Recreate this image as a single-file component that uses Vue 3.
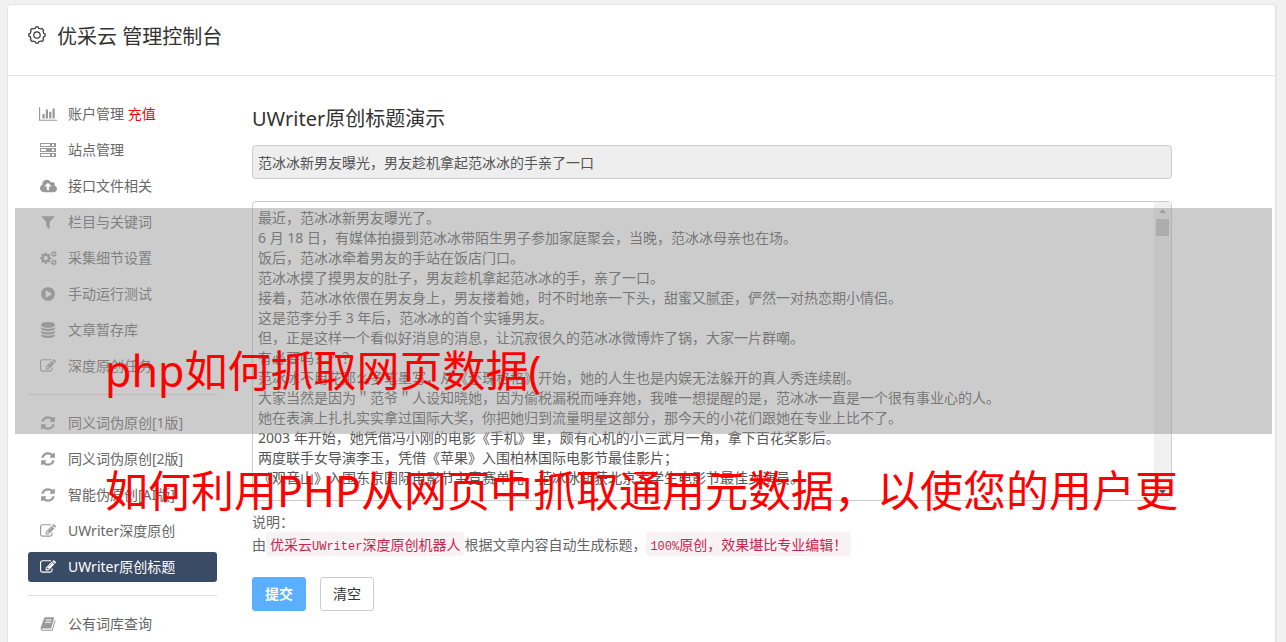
<script setup>
import { ref } from 'vue'

function gearPath(cx, cy, teeth, outer, inner, hole) {
  const step = (Math.PI * 2) / teeth
  const pts = []
  for (let i = 0; i < teeth; i++) {
    const a = i * step
    const corners = [[-0.3, inner], [-0.18, outer], [0.18, outer], [0.3, inner]]
    for (const [k, r] of corners) {
      pts.push(`${(cx + r * Math.cos(a + k * step)).toFixed(2)} ${(cy + r * Math.sin(a + k * step)).toFixed(2)}`)
    }
  }
  return `M${pts.join('L')}ZM${cx - hole} ${cy}a${hole} ${hole} 0 1 0 ${hole * 2} 0a${hole} ${hole} 0 1 0 ${-hole * 2} 0Z`
}

const cogs = gearPath(5.8, 8.2, 8, 5.8, 4.5, 2.1) + gearPath(13.9, 4, 7, 3.1, 2.3, 1.1) + gearPath(13.9, 12.4, 7, 3.1, 2.3, 1.1)
const brandGear = gearPath(9, 9, 8, 8.2, 7, 3.2)

const icons = {
  chart: { box: '0 0 2048 1792', w: 18, d: 'M640 896v512h-256v-512h256zm384-512v1024h-256v-1024h256zm1024 1152v128h-2048v-1536h128v1408h1920zm-640-896v768h-256v-768h256zm384-384v1152h-256v-1152h256z' },
  server: { box: '0 0 16 16', w: 16, d: 'M0 1h16v4H0zM1 2v2h9v-2zM12 2v2h2v-2zM0 6h16v4H0zM1 7v2h5v-2zM12 7v2h2v-2zM0 11h16v4H0zM1 12v2h9v-2zM12 12v2h2v-2z' },
  cloud: { box: '0 0 1920 1792', w: 17, d: 'M1280 928q0-14-9-23l-352-352q-9-9-23-9t-23 9l-351 351q-10 12-10 24 0 14 9 23t23 9h224v352q0 13 9.5 22.5t22.5 9.5h192q13 0 22.5-9.5t9.5-22.5v-352h224q13 0 22.5-9.5t9.5-22.5zm640 288q0 159-112.5 271.5t-271.5 112.500h-1088q-185 0-316.500-131.500t-131.500-316.500q0-130 70-240t188-165q-2-30-2-43 0-212 150-362t362-150q156 0 285.500 87t188.500 231q71-62 166-62 106 0 181 75t75 181q0 76-41 138 130 31 213.500 135.500t83.500 238.500z' },
  filter: { box: '0 0 1792 1792', w: 16, d: 'M1595 295q17 41-14 70l-493 493v742q0 42-39 59-13 5-25 5-27 0-45-19l-256-256q-19-19-19-45v-486l-493-493q-31-29-14-70 17-39 59-39h1280q42 0 59 39z' },
  cogs: { box: '0 0 17 16', w: 17, d: cogs },
  play: { box: '0 0 1792 1792', w: 16, d: 'M896 128q209 0 385.500 103t279.500 279.500 103 385.500-103 385.500-279.500 279.500-385.500 103-385.500-103-279.500-279.500-103-385.500 103-385.500 279.500-279.500 385.500-103zm384 823q32-18 32-55t-32-55l-544-320q-31-19-64-1-32 19-32 56v640q0 37 32 56 16 8 32 8 17 0 32-9z' },
  database: { box: '0 0 1792 1792', w: 16, d: 'M896 768q237 0 443-43t325-127v170q0 69-103 128t-280 93.500-385 34.500-385-34.500-280-93.500-103-128v-170q119 84 325 127t443 43zm0 768q237 0 443-43t325-127v170q0 69-103 128t-280 93.500-385 34.500-385-34.500-280-93.500-103-128v-170q119 84 325 127t443 43zm0-384q237 0 443-43t325-127v170q0 69-103 128t-280 93.500-385 34.500-385-34.500-280-93.500-103-128v-170q119 84 325 127t443 43zm0-1152q208 0 385 34.500t280 93.500 103 128v128q0 69-103 128t-280 93.500-385 34.500-385-34.500-280-93.500-103-128v-128q0-69 103-128t280-93.500 385-34.500z' },
  edit: { box: '0 0 1792 1792', w: 16, d: 'M888 1184l116-116-152-152-116 116v56h96v96h56zm440-720q-16-16-33 1l-350 350q-17 17-1 33t33-1l350-350q17-17 1-33zm80 594v190q0 119-84.500 203.500t-203.500 84.500h-832q-119 0-203.500-84.500t-84.500-203.500v-832q0-119 84.500-203.500t203.500-84.500h832q63 0 117 25 15 7 18 23 3 17-9 29l-49 49q-14 14-32 8-23-6-45-6h-832q-66 0-113 47t-47 113v832q0 66 47 113t113 47h832q66 0 113-47t47-113v-126q0-13 9-22l64-64q15-15 35-7t20 29zm-96-738l288 288-672 672h-288v-288zm444 132l-92 92-288-288 92-92q28-28 68-28t68 28l152 152q28 28 28 68t-28 68z' },
  refresh: { box: '0 0 1792 1792', w: 16, d: 'M1639 1056q0 5-1 7-64 268-268 434.500t-478 166.500q-146 0-282.500-55t-243.500-157l-129 129q-19 19-45 19t-45-19-19-45v-448q0-26 19-45t45-19h448q26 0 45 19t19 45-19 45l-137 137q71 66 161 102t187 36q134 0 250-65t186-179q11-17 53-117 8-23 30-23h192q13 0 22.500 9.500t9.500 22.500zm25-800v448q0 26-19 45t-45 19h-448q-26 0-45-19t-19-45 19-45l138-138q-148-137-349-137-134 0-250 65t-186 179q-11 17-53 117-8 23-30 23h-199q-13 0-22.500-9.500t-9.500-22.500v-7q65-268 270-434.500t480-166.500q146 0 284 55.500t245 156.500l130-129q19-19 45-19t45 19 19 45z' },
  book: { box: '0 0 1792 1792', w: 16, d: 'M1703 478q40 57 18 129l-275 906q-19 64-76.500 107.500t-122.500 43.500h-923q-77 0-148.500-53.500t-99.500-131.500q-24-67-2-127 0-4 3-27t4-37q1-8-3-21.500t-3-19.500q2-11 8-21t16.500-23.500 16.500-23.500q23-38 45-91.500t30-91.500q3-10 .5-30t-.5-28q3-11 17-28t17-23q21-36 42-92t25-90q1-9-2.500-32t.5-28q4-13 22-30.500t22-22.500q19-26 42.500-84.500t27.500-96.500q1-8-3-25.500t-2-26.500q2-8 9-18t18-23 17-21q8-12 16.500-30.500t15-35 16-36 19.500-32 26.500-23.500 36-11.500 47.500 5.500l-1 3q38-9 51-9h761q74 0 114 56t18 130l-274 906q-36 119-71.500 153.500t-128.500 34.500h-869q-27 0-38 15-11 16-1 43 24 70 144 70h923q29 0 56-15.500t35-41.500l300-987q7-22 5-57 38 15 59 43zm-1064 2q-4 13 2 22.500t20 9.500h608q13 0 25.500-9.500t16.500-22.500l21-64q4-13-2-22.500t-20-9.500h-608q-13 0-25.500 9.500t-16.500 22.500zm-83 256q-4 13 2 22.500t20 9.500h608q13 0 25.500-9.500t16.500-22.500l21-64q4-13-2-22.500t-20-9.500h-608q-13 0-25.500 9.500t-16.500 22.500z' }
}

const groups = [
  [
    { icon: 'chart', text: '账户管理', extra: '充值' },
    { icon: 'server', text: '站点管理' },
    { icon: 'cloud', text: '接口文件相关' },
    { icon: 'filter', text: '栏目与关键词' },
    { icon: 'cogs', text: '采集细节设置' },
    { icon: 'play', text: '手动运行测试' },
    { icon: 'database', text: '文章暂存库' },
    { icon: 'edit', text: '深度原创任务' }
  ],
  [
    { icon: 'refresh', text: '同义词伪原创[1版]' },
    { icon: 'refresh', text: '同义词伪原创[2版]' },
    { icon: 'refresh', text: '智能伪原创[AI版]' },
    { icon: 'edit', text: 'UWriter深度原创' },
    { icon: 'edit', text: 'UWriter原创标题', active: true }
  ],
  [{ icon: 'book', text: '公有词库查询' }]
]

const title = ref('范冰冰新男友曝光，男友趁机拿起范冰冰的手亲了一口')
const article = ref([
  '最近，范冰冰新男友曝光了。',
  '6 月 18 日，有媒体拍摄到范冰冰带陌生男子参加家庭聚会，当晚，范冰冰母亲也在场。',
  '饭后，范冰冰牵着男友的手站在饭店门口。',
  '范冰冰摸了摸男友的肚子，男友趁机拿起范冰冰的手，亲了一口。',
  '接着，范冰冰依偎在男友身上，男友搂着她，时不时地亲一下头，甜蜜又腻歪，俨然一对热恋期小情侣。',
  '这是范李分手 3 年后，范冰冰的首个实锤男友。',
  '但，正是这样一个看似好消息的消息，让沉寂很久的范冰冰微博炸了锅，大家一片群嘲。',
  '有必要吗？？？',
  '范冰冰不用花那么多笔墨写，从《还珠格格》开始，她的人生也是内娱无法躲开的真人秀连续剧。',
  '大家当然是因为＂范爷＂人设知晓她，因为偷税漏税而唾弃她，我唯一想提醒的是，范冰冰一直是一个很有事业心的人。',
  '她在表演上扎扎实实拿过国际大奖，你把她归到流量明星这部分，那今天的小花们跟她在专业上比不了。',
  '2003 年开始，她凭借冯小刚的电影《手机》里，颇有心机的小三武月一角，拿下百花奖影后。',
  '两度联手女导演李玉，凭借《苹果》入围柏林国际电影节最佳影片；',
  '《观音山》入围东京国际电影节主竞赛单元，范冰冰斩获北京大学生电影节最佳女演员。'
].join('\n'))
</script>

<template>
  <div class="page">
    <div class="card">
      <header class="top">
        <svg class="brand" viewBox="0 0 18 18" aria-hidden="true"><path :d="brandGear" /></svg>
        <h1>优采云 管理控制台</h1>
      </header>
      <div class="body">
        <nav class="side">
          <ul v-for="(group, g) in groups" :key="g">
            <li v-for="item in group" :key="item.text">
              <a href="#" :class="{ active: item.active }">
                <span class="ico">
                  <svg :viewBox="icons[item.icon].box" :width="icons[item.icon].w" height="16" aria-hidden="true">
                    <path :d="icons[item.icon].d" fill-rule="evenodd" />
                  </svg>
                </span>
                <span>{{ item.text }} <em v-if="item.extra">{{ item.extra }}</em></span>
              </a>
            </li>
          </ul>
        </nav>
        <main class="main">
          <h2>UWriter原创标题演示</h2>
          <input v-model="title" class="field" type="text" readonly aria-label="标题" />
          <div class="area">
            <textarea v-model="article" aria-label="文章内容"></textarea>
            <div class="bar" aria-hidden="true">
              <svg viewBox="0 0 17 17"><path d="M5 11h7L8.500 7z" /></svg>
              <i></i>
              <svg class="down" viewBox="0 0 17 17"><path d="M5 7h7L8.500 11z" /></svg>
            </div>
          </div>
          <p>说明：</p>
          <p class="note">由<code>优采云<span>UWriter</span>深度原创机器人</code>根据文章内容自动生成标题，<code><span>100%</span>原创，效果堪比专业编辑！</code></p>
          <div class="actions">
            <button class="primary" type="button">提交</button>
            <button type="button">清空</button>
          </div>
        </main>
      </div>
    </div>
    <div class="shade"></div>
    <div class="caption first">php如何抓取网页数据(</div>
    <div class="caption second">如何利用PHP从网页中抓取通用元数据，以使您的用户更</div>
  </div>
</template>

<style>
body {
  margin: 0;
  background: #f1f1f1;
}
</style>

<style scoped>
* {
  box-sizing: border-box;
}
.page {
  position: relative;
  height: 100vh;
  overflow: hidden;
  padding: 4px 9px 0 7px;
  font: 400 14px/20px "Noto Sans", "Noto Sans CJK SC", sans-serif;
  color: #666;
}
.card {
  min-height: 100%;
  background: #fff;
  border: 1px solid #e5e5e5;
  border-right-width: 2px;
  border-bottom: 0;
  border-radius: 4px 4px 0 0;
}
.top {
  display: flex;
  align-items: center;
  gap: 11px;
  height: 71px;
  padding: 0 20px 10px;
  border-bottom: 1px solid #e5e5e5;
}
.brand {
  width: 18px;
  height: 18px;
  fill: none;
  stroke: #333;
  stroke-width: 1.2;
  stroke-linejoin: round;
}
h1,
h2 {
  margin: 0;
  font-size: 20px;
  font-weight: 400;
  line-height: 28px;
  color: #333;
}
h1 {
  padding-top: 3px;
}
.body {
  display: flex;
  gap: 35px;
  padding: 23px 103px 0 20px;
}
.side {
  flex: 0 0 189px;
}
ul {
  display: flex;
  flex-direction: column;
  gap: 6px;
  margin: 0;
  padding: 0;
  list-style: none;
}
ul + ul {
  margin-top: 13px;
  padding-top: 13px;
  border-top: 1px solid #ddd;
}
.side a {
  display: flex;
  align-items: center;
  gap: 10px;
  height: 30px;
  padding: 0 10px;
  border-radius: 3px;
  color: #666;
  text-decoration: none;
}
.side a.active {
  background: #3a4b66;
  color: #fff;
}
.side em {
  color: #f00;
  font-style: normal;
}
.ico {
  display: flex;
  justify-content: center;
  width: 20px;
  color: #999;
}
.ico svg {
  flex: none;
  fill: currentColor;
}
.active .ico {
  color: #fff;
}
.main {
  flex: 1;
  min-width: 0;
  padding-top: 6px;
}
.field {
  display: block;
  width: 100%;
  height: 34px;
  margin: 12px 0 22px;
  padding: 0 5px;
  border: 1px solid #ccc;
  border-radius: 4px;
  background: #eee;
  font: inherit;
  color: #555;
}
.area {
  position: relative;
  height: 300px;
  margin-bottom: 11px;
}
textarea {
  display: block;
  width: 100%;
  height: 100%;
  padding: 6px 24px 6px 5px;
  border: 1px solid #ccc;
  border-radius: 4px;
  background: #fff;
  font: inherit;
  color: #555;
  resize: none;
  overflow: hidden;
}
.bar {
  position: absolute;
  top: 1px;
  right: 1px;
  bottom: 1px;
  display: flex;
  flex-direction: column;
  width: 17px;
  background: #f1f1f1;
}
.bar svg {
  width: 17px;
  height: 17px;
  fill: #a3a3a3;
}
.bar i {
  height: 17px;
  margin: 0 2px;
  background: #c1c1c1;
}
.bar .down {
  margin-top: auto;
  fill: #505050;
}
p {
  margin: 0;
}
.note {
  margin-top: 3px;
}
code {
  padding: 2px 4px;
  border-radius: 4px;
  background: #f9f2f4;
  font: 400 14px/15px "Noto Sans CJK SC", sans-serif;
  color: #c7254e;
}
code span {
  font: 400 12px/15px "Liberation Mono", monospace;
}
.actions {
  display: flex;
  gap: 14px;
  margin-top: 22px;
}
button {
  width: 54px;
  height: 34px;
  padding: 0;
  border: 1px solid #ccc;
  border-radius: 3px;
  background: #fff;
  font: inherit;
  color: #333;
}
.primary {
  border-color: #5aafff;
  background: #5aafff;
  font-weight: 700;
  color: #fff;
}
.shade {
  position: absolute;
  top: 208px;
  right: 14px;
  left: 15px;
  height: 226px;
  background: rgba(153, 153, 153, 0.5);
}
.caption {
  position: absolute;
  left: 105px;
  font-size: 43px;
  font-weight: 400;
  line-height: 60px;
  white-space: nowrap;
  color: #f00;
}
.first {
  top: 341px;
}
.second {
  top: 461px;
}
</style>
